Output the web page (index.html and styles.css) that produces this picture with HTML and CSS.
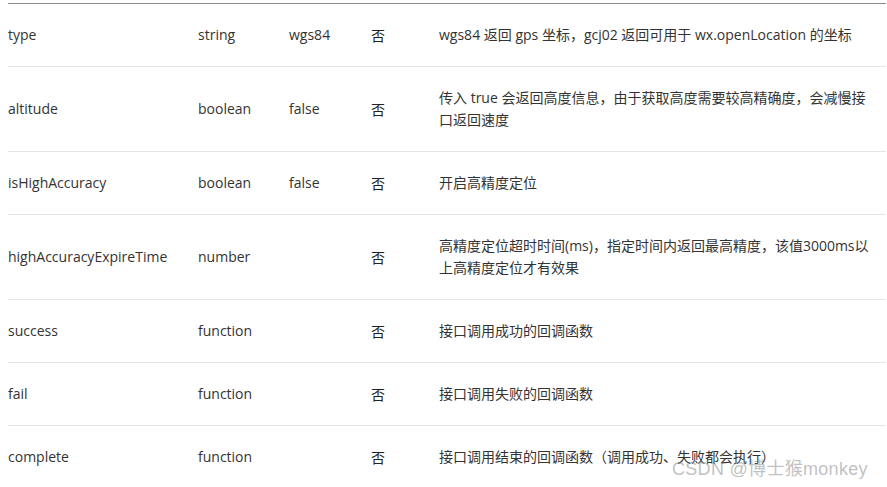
FILE: index.html
```html
<!DOCTYPE html>
<html lang="zh">
<head>
<meta charset="utf-8">
<link rel="stylesheet" href="styles.css">
</head>
<body>
<div class="page">
<table class="params">
  <colgroup>
    <col class="c1"><col class="c2"><col class="c3"><col class="c4"><col class="c5">
  </colgroup>
  <tbody>
    <tr><td>type</td><td>string</td><td>wgs84</td><td>否</td><td>wgs84 返回 gps 坐标，gcj02 返回可用于 wx.openLocation 的坐标</td></tr>
    <tr><td>altitude</td><td>boolean</td><td>false</td><td>否</td><td>传入 true 会返回高度信息，由于获取高度需要较高精确度，会减慢接口返回速度</td></tr>
    <tr><td>isHighAccuracy</td><td>boolean</td><td>false</td><td>否</td><td>开启高精度定位</td></tr>
    <tr><td>highAccuracyExpireTime</td><td>number</td><td></td><td>否</td><td>高精度定位超时时间(ms)，指定时间内返回最高精度，该值3000ms以上高精度定位才有效果</td></tr>
    <tr><td>success</td><td>function</td><td></td><td>否</td><td>接口调用成功的回调函数</td></tr>
    <tr><td>fail</td><td>function</td><td></td><td>否</td><td>接口调用失败的回调函数</td></tr>
    <tr><td>complete</td><td>function</td><td></td><td>否</td><td>接口调用结束的回调函数（调用成功、失败都会执行）</td></tr>
  </tbody>
</table>
<div class="watermark">CSDN @博士猴monkey</div>
</div>
</body>
</html>
```
FILE: styles.css
```css
html, body {
  margin: 0;
  padding: 0;
  background: #fff;
}
.page {
  position: relative;
  padding: 3px 1px 0 8px;
  height: 487px;
  overflow: hidden;
  box-sizing: border-box;
}
.params {
  width: 878px;
  border-collapse: collapse;
  table-layout: fixed;
  border-top: 1px solid #8a8a8a;
  font-family: "Open Sans", "Noto Sans CJK SC", sans-serif;
  font-size: 14px;
  line-height: 22px;
  color: #333;
}
.c1 { width: 190px; }
.c2 { width: 91px; }
.c3 { width: 82px; }
.c4 { width: 68px; }
.params td {
  padding: 20px 22px 20px 0;
  border-bottom: 1px solid #e5e5e5;
  vertical-align: middle;
  word-break: break-all;
}
.params td:nth-child(5) {
  padding-right: 9px;
}
.params td:nth-child(4) {
  font-family: "Noto Sans CJK SC", sans-serif;
  color: #222;
}
.watermark {
  position: absolute;
  left: 672px;
  top: 454px;
  font-family: "Liberation Sans", "Noto Sans CJK SC", sans-serif;
  font-size: 18px;
  letter-spacing: 0.3px;
  color: rgba(130, 130, 130, 0.5);
  white-space: nowrap;
}
```
